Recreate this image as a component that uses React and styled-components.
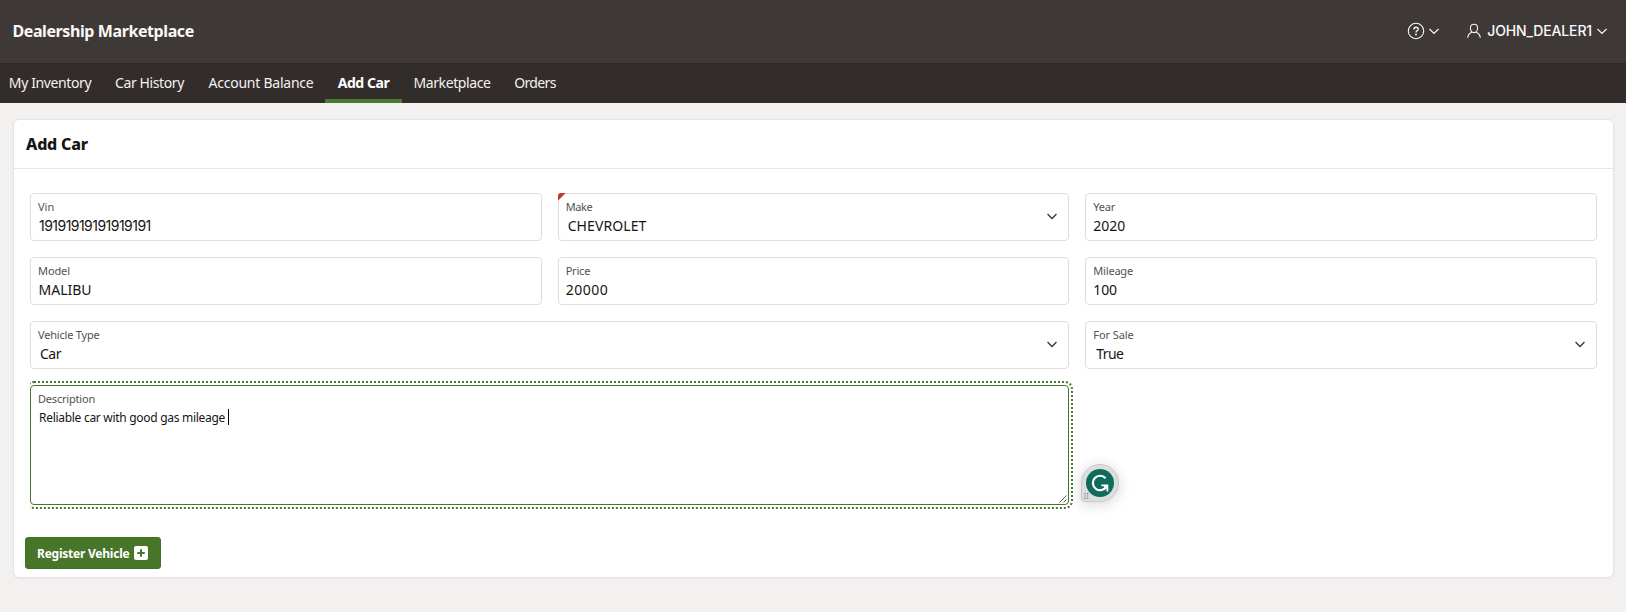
import React from "react";
import styled, { createGlobalStyle } from "styled-components";

const GlobalStyle = createGlobalStyle`
  * { box-sizing: border-box; }
  body {
    margin: 0;
    min-height: 100vh;
    background: #f3f1f0;
    color: #161513;
    font-family: "Noto Sans", "Open Sans", sans-serif;
    font-size: 14px;
  }
`;

const Track = styled.span`
  letter-spacing: ${(p) => p.$by || 0}px;
`;

const Header = styled.header`
  height: 63px;
  padding: 0 19px 1px 12.5px;
  display: flex;
  align-items: center;
  justify-content: space-between;
  background: #3e3936;
  color: #fbf9f8;
`;

const Brand = styled.div`
  font-size: 16px;
  font-weight: 700;
  line-height: 24px;
`;

const HeaderActions = styled.div`
  display: flex;
  align-items: center;
`;

const HeaderButton = styled.div`
  display: flex;
  align-items: center;
  margin-left: ${(p) => p.$offset || 0}px;
`;

const UserName = styled.span`
  margin: 0 5px 0 6px;
  font-family: Inter, sans-serif;
  font-size: 14px;
  font-weight: 500;
  line-height: 20px;
`;

const Nav = styled.nav`
  height: 40px;
  display: flex;
  background: #322d2b;
  border-top: 1px solid #2e2926;
  color: #f4f2f0;
`;

const NavItem = styled.a`
  width: ${(p) => p.$width}px;
  padding-right: ${(p) => p.$inset || 0}px;
  display: flex;
  justify-content: center;
  line-height: 38px;
  white-space: nowrap;
  font-weight: ${(p) => (p.$active ? 700 : 400)};
  color: ${(p) => (p.$active ? "#ffffff" : "inherit")};
  box-shadow: ${(p) => (p.$active ? "inset 0 -4px #4e7935" : "none")};
`;

const Card = styled.section`
  margin: 16px 12px 0 13px;
  height: 459px;
  display: flex;
  flex-direction: column;
  align-items: flex-start;
  background: #fff;
  border: 1px solid #e4e2e2;
  border-radius: 6px;
  box-shadow: 0 1px 3px rgba(0, 0, 0, 0.04);
`;

const CardHeading = styled.h2`
  margin: 0;
  width: 100%;
  height: 49px;
  padding-left: 12px;
  border-bottom: 1px solid #e8e7e6;
  font-size: 16px;
  font-weight: 800;
  line-height: 48px;
`;

const FieldGrid = styled.div`
  width: 100%;
  padding: 24px 16px 0 16px;
  display: grid;
  grid-template-columns: repeat(3, 1fr);
  gap: 16px;
`;

const Cell = styled.div`
  grid-column: span ${(p) => p.$span || 1};
  min-width: 0;
`;

const FieldBox = styled.div`
  position: relative;
  height: ${(p) => p.$height || 48}px;
  padding: 5px 7px 0;
  border: 1px solid ${(p) => (p.$focused ? "#47762a" : "#dededd")};
  border-radius: 4px;
  background: #fff;
  outline: ${(p) => (p.$focused ? "2px dotted #4b7534" : "none")};
  outline-offset: 2px;
`;

/* The focus ring is cut off at the left edge of the form column. */
const FocusClip = styled.div`
  clip-path: inset(-8px -8px -8px 0);
`;

const Label = styled.div`
  font-size: 11px;
  line-height: 16px;
  color: #53514f;
`;

const Value = styled.div`
  padding-left: ${(p) => p.$indent || 0}px;
  font-family: ${(p) => (p.$digits ? "Inter, sans-serif" : "inherit")};
  font-size: ${(p) => p.$size || 14}px;
  line-height: 21px;
  display: flex;
  align-items: center;
`;

const Required = styled.span`
  position: absolute;
  top: -1px;
  left: -1px;
  width: 8px;
  height: 8px;
  border-top-left-radius: 3px;
  background: #c5362c;
  clip-path: polygon(0 0, 100% 0, 0 100%);
`;

const SelectArrow = styled.span`
  position: absolute;
  right: 11px;
  top: 15.5px;
  height: 14px;
  display: flex;
  align-items: center;
  color: #3b3937;
`;

const Caret = styled.span`
  width: 1px;
  height: 16px;
  margin: -1px 0 0 3px;
  background: #000;
`;

const Grip = styled.svg`
  position: absolute;
  right: 1px;
  bottom: 1px;
`;

const RegisterButton = styled.button`
  margin: 32px 0 0 11px;
  width: 136px;
  height: 32px;
  padding: 0 11px;
  display: flex;
  align-items: center;
  gap: 5px;
  border: 1px solid #41702a;
  border-radius: 3px;
  background: #47762a;
  color: #fff;
  font-family: inherit;
  font-size: 12px;
  font-weight: 700;
  white-space: nowrap;
`;

const Assistant = styled.div`
  position: absolute;
  left: 1081px;
  top: 464px;
  width: 38px;
  height: 38px;
  border: 1px solid #c9c9c9;
  border-radius: 19px 19px 19px 4px;
  background: #dedede;
  box-shadow: 0 2px 14px rgba(0, 0, 0, 0.17);
`;

const Chevron = ({ width = 10, stroke = 1.2 }) => (
  <svg width={width} height="7" viewBox="0 0 10 7" fill="none" stroke="currentColor" strokeWidth={stroke}>
    <path d="M0.5 1 L5 5.5 L9.5 1" />
  </svg>
);

const HelpIcon = () => (
  <svg width="18" height="18" viewBox="0 0 18 18" fill="none" stroke="currentColor" strokeWidth="1.1">
    <circle cx="9" cy="9" r="7.7" />
    <path strokeWidth="1.4" d="M6.9 7.4C6.9 6 7.8 5.2 9 5.2S11.2 6 11.2 7.2C11.2 8.8 9 8.8 9 10.5" />
    <circle cx="9" cy="12.5" r="0.9" fill="currentColor" stroke="none" />
  </svg>
);

const UserIcon = () => (
  <svg width="14" height="16" viewBox="0 0 14 16" fill="none" stroke="currentColor" strokeWidth="1.1">
    <path d="M7 1.2C9.2 1.2 10.6 2.7 10.6 5C10.6 7.6 9.1 9.6 7 9.6S3.4 7.6 3.4 5C3.4 2.7 4.8 1.2 7 1.2Z" />
    <path d="M5 9.2C2.3 10.2 0.9 11.5 0.7 14.8M9 9.2C11.7 10.2 13.1 11.5 13.3 14.8" />
  </svg>
);

const PlusSquare = () => (
  <svg width="14" height="14" viewBox="0 0 14 14">
    <rect width="14" height="14" rx="2" fill="#fff" />
    <path d="M7 3.3V10.7M3.3 7H10.7" stroke="#47762a" strokeWidth="2" />
  </svg>
);

const AssistantIcon = () => (
  <svg width="36" height="36" viewBox="0 0 36 36" fill="none">
    <circle cx="18" cy="18" r="14" fill="#0f6b5c" />
    <path d="M23.6 13.3A7.2 7.2 0 1 0 24.4 21.4" stroke="#fff" strokeWidth="2.2" />
    <path d="M19.4 20.4H25.4V26.4" stroke="#fff" strokeWidth="1.8" />
    <path d="M21.4 20.4H26V25.6Z" fill="#fff" />
    <path
      d="M2.5 28.7H3.7M5 28.7H6.2M2.5 31H3.7M5 31H6.2M2.5 33.3H3.7M5 33.3H6.2"
      stroke="#777"
      strokeWidth="1.2"
    />
  </svg>
);

const navItems = [
  { text: "My Inventory", width: 103, track: -0.39, inset: 3 },
  { text: "Car History", width: 94, track: -0.38, inset: 1 },
  { text: "Account Balance", width: 128, track: -0.24 },
  { text: "Add Car", width: 77, track: -0.42, active: true },
  { text: "Marketplace", width: 100, track: -0.4 },
  { text: "Orders", width: 66, track: -0.62 },
];

const fields = [
  { label: "Vin", value: "19191919191919191", track: -0.53, digits: true, indent: 1 },
  { label: "Make", labelTrack: -0.4, value: "CHEVROLET", track: 0.1, indent: 2, select: true, required: true },
  { label: "Year", labelTrack: -0.2, value: "2020" },
  { label: "Model", labelTrack: -0.1, value: "MALIBU", indent: 0.5 },
  { label: "Price", labelTrack: -0.2, value: "20000", track: 0.5 },
  { label: "Mileage", labelTrack: -0.2, value: "100", track: -0.2 },
  { label: "Vehicle Type", labelTrack: -0.2, value: "Car", track: -0.5, indent: 2, select: true, span: 2 },
  { label: "For Sale", labelTrack: -0.1, value: "True", track: -0.6, indent: 3, select: true },
];

const Field = ({ label, labelTrack, value, track, digits, indent, select, required, span }) => (
  <Cell $span={span}>
    <FieldBox>
      {required && <Required />}
      <Label>
        <Track $by={labelTrack}>{label}</Track>
      </Label>
      <Value $digits={digits} $indent={indent}>
        <Track $by={track}>{value}</Track>
      </Value>
      {select && (
        <SelectArrow>
          <Chevron stroke={1.3} />
        </SelectArrow>
      )}
    </FieldBox>
  </Cell>
);

export default function App() {
  return (
    <>
      <GlobalStyle />
      <Header>
        <Brand>
          <Track $by={-0.41}>Dealership Marketplace</Track>
        </Brand>
        <HeaderActions>
          <HeaderButton>
            <HelpIcon />
            <HeaderButton $offset={4.5}>
              <Chevron />
            </HeaderButton>
          </HeaderButton>
          <HeaderButton $offset={28}>
            <UserIcon />
            <UserName>
              <Track $by={-0.15}>JOHN_DEALER1</Track>
            </UserName>
            <Chevron />
          </HeaderButton>
        </HeaderActions>
      </Header>
      <Nav>
        {navItems.map((item) => (
          <NavItem key={item.text} $width={item.width} $inset={item.inset} $active={item.active}>
            <Track $by={item.track}>{item.text}</Track>
          </NavItem>
        ))}
      </Nav>
      <Card>
        <CardHeading>
          <Track $by={-0.2}>Add Car</Track>
        </CardHeading>
        <FieldGrid>
          {fields.map((f) => (
            <Field key={f.label} {...f} />
          ))}
          <Cell $span={2}>
            <FocusClip>
              <FieldBox $height={120} $focused>
                <Label>
                  <Track $by={-0.2}>Description</Track>
                </Label>
                <Value $size={12} $indent={1}>
                  <Track $by={-0.29}>Reliable car with good gas mileage</Track>
                  <Caret />
                </Value>
                <Grip width="8" height="8" viewBox="0 0 8 8" stroke="#555" strokeWidth="1">
                  <path d="M0.5 7.5L7.5 0.5M4.5 7.5L7.5 4.5" />
                </Grip>
              </FieldBox>
            </FocusClip>
          </Cell>
        </FieldGrid>
        <RegisterButton>
          <Track $by={-0.23}>Register Vehicle</Track>
          <PlusSquare />
        </RegisterButton>
      </Card>
      <Assistant>
        <AssistantIcon />
      </Assistant>
    </>
  );
}
